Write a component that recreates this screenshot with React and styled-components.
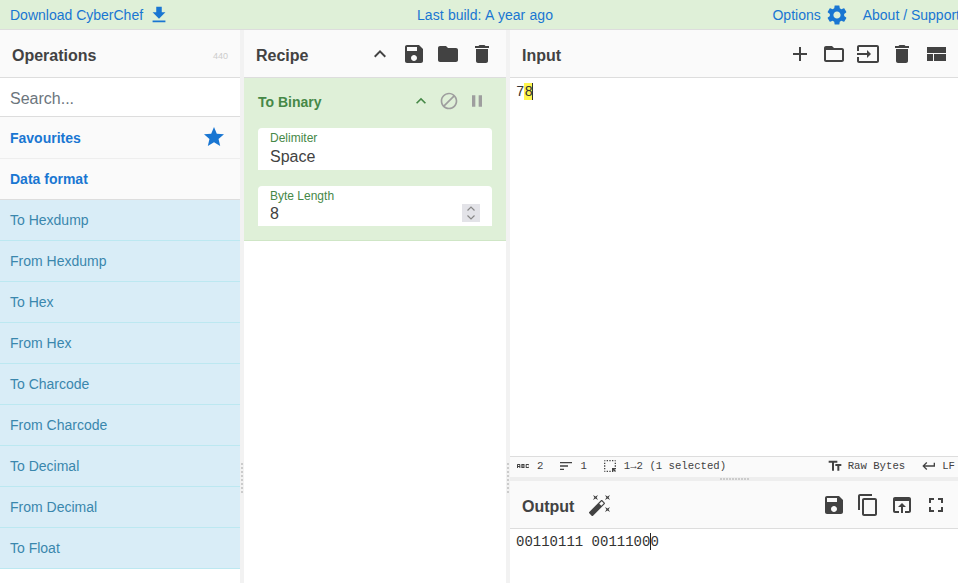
import React from "react";
import styled, { createGlobalStyle } from "styled-components";

const P = {
  save: "M17 3H5c-1.11 0-2 .9-2 2v14c0 1.1.89 2 2 2h14c1.1 0 2-.9 2-2V7l-4-4zm-5 16c-1.66 0-3-1.34-3-3s1.34-3 3-3 3 1.34 3 3-1.34 3-3 3zm3-10H5V5h10v4z",
  folder: "M10 4H4c-1.1 0-1.99.9-1.99 2L2 18c0 1.1.9 2 2 2h16c1.1 0 2-.9 2-2V8c0-1.1-.9-2-2-2h-8l-2-2z",
  del: "M6 19c0 1.1.9 2 2 2h8c1.1 0 2-.9 2-2V7H6v12zM19 4h-3.5l-1-1h-5l-1 1H5v2h14V4z",
  up: "M7.41 15.41L12 10.83l4.59 4.58L18 14l-6-6-6 6z",
  add: "M19 13h-6v6h-2v-6H5v-2h6V5h2v6h6v2z",
  open: "M20 6h-8l-2-2H4c-1.1 0-1.99.9-1.99 2L2 18c0 1.1.9 2 2 2h16c1.1 0 2-.9 2-2V8c0-1.1-.9-2-2-2zm0 12H4V8h16v10z",
  input: "M21 3.01H3c-1.1 0-2 .9-2 2V9h2V4.99h18v14.03H3V15H1v4.01c0 1.1.9 1.98 2 1.98h18c1.1 0 2-.88 2-1.98v-14c0-1.11-.9-2-2-2zM11 16l4-4-4-4v3H1v2h10v3z",
  compact: "M3 19h6v-7H3v7zm7 0h12v-7H10v7zM3 5v6h19V5H3z",
  download: "M19 9h-4V3H9v6H5l7 7 7-7zM5 18v2h14v-2H5z",
  settings: "M19.14 12.94c.04-.3.06-.61.06-.94 0-.32-.02-.64-.07-.94l2.03-1.58c.18-.14.23-.41.12-.61l-1.92-3.32c-.12-.22-.37-.29-.59-.22l-2.39.96c-.5-.38-1.03-.7-1.62-.94l-.36-2.54c-.04-.24-.24-.41-.48-.41h-3.84c-.24 0-.43.17-.47.41l-.36 2.54c-.59.24-1.13.57-1.62.94l-2.39-.96c-.22-.08-.47 0-.59.22L2.74 8.87c-.12.21-.08.47.12.61l2.03 1.58c-.05.3-.09.63-.09.94s.02.64.07.94l-2.03 1.58c-.18.14-.23.41-.12.61l1.92 3.32c.12.22.37.29.59.22l2.39-.96c.5.38 1.03.7 1.62.94l.36 2.54c.05.24.24.41.48.41h3.84c.24 0 .44-.17.47-.41l.36-2.54c.59-.24 1.13-.56 1.62-.94l2.39.96c.22.08.47 0 .59-.22l1.92-3.32c.12-.22.07-.47-.12-.61l-2.01-1.58zM12 15.6c-1.98 0-3.6-1.62-3.6-3.6s1.62-3.6 3.6-3.6 3.6 1.62 3.6 3.6-1.62 3.6-3.6 3.6z",
  star: "M12 17.27L18.18 21l-1.64-7.03L22 9.24l-7.19-.61L12 2 9.19 8.63 2 9.24l5.46 4.73L5.82 21z",
  block: "M12 2C6.48 2 2 6.48 2 12s4.48 10 10 10 10-4.48 10-10S17.52 2 12 2zM4 12c0-4.42 3.58-8 8-8 1.85 0 3.55.63 4.9 1.69L5.69 16.9C4.63 15.55 4 13.85 4 12zm8 8c-1.85 0-3.55-.63-4.9-1.69L18.31 7.1C19.37 8.45 20 10.15 20 12c0 4.42-3.58 8-8 8z",
  pause: "M6 19h4V5H6v14zm8-14v14h4V5h-4z",
  copy: "M16 1H4c-1.1 0-2 .9-2 2v14h2V3h12V1zm3 4H8c-1.1 0-2 .9-2 2v14c0 1.1.9 2 2 2h11c1.1 0 2-.9 2-2V7c0-1.1-.9-2-2-2zm0 16H8V7h11v14z",
  browser: "M19 4H5c-1.11 0-2 .9-2 2v12c0 1.1.89 2 2 2h4v-2H5V8h14v10h-4v2h4c1.1 0 2-.9 2-2V6c0-1.1-.89-2-2-2zm-7 6l-4 4h3v6h2v-6h3l-4-4z",
  full: "M7 14H5v5h5v-2H7v-3zm-2-4h2V7h3V5H5v5zm12 7h-3v2h5v-5h-2v3zM14 5v2h3v3h2V5h-5z",
  wand: "M7.5 5.6L10 7 8.6 4.5 10 2 7.5 3.4 5 2l1.4 2.5L5 7zm12 9.8L17 14l1.4 2.5L17 19l2.5-1.4L22 19l-1.4-2.5L22 14zM22 2l-2.5 1.4L17 2l1.4 2.5L17 7l2.5-1.4L22 7l-1.4-2.5zm-7.63 5.29c-.39-.39-1.02-.39-1.41 0L1.29 18.96c-.39.39-.39 1.02 0 1.41l2.34 2.34c.39.39 1.02.39 1.41 0L16.7 11.05c.39-.39.39-1.02 0-1.41l-2.33-2.35zm-1.03 5.49l-2.12-2.12 2.44-2.44 2.12 2.12-2.44 2.44z",
  text: "M2.5 4v3h5v12h3V7h5V4h-13zm19 5h-9v3h3v7h3v-7h3V9z",
  ret: "M19 7v4H5.83l3.58-3.59L8 6l-6 6 6 6 1.41-1.41L5.83 13H21V7z",
  sort: "M3 18h6v-2H3v2zM3 6v2h18V6H3zm0 7h12v-2H3v2z",
  select: "M17 5h-2V3h2v2zm-2 16h2v-2.59L19.59 21 21 19.59 18.41 17H21v-2h-6v6zm4-12h2V7h-2v2zm0 4h2v-2h-2v2zm-8 8h2v-2h-2v2zM7 5h2V3H7v2zM3 17h2v-2H3v2zm2 4v-2H3c0 1.1.9 2 2 2zM19 3v2h2c0-1.1-.9-2-2-2zm-8 2h2V3h-2v2zM3 9h2V7H3v2zm4 12h2v-2H7v2zm-4-8h2v-2H3v2zm0-8h2V3c-1.1 0-2 .9-2 2z",
  abc: "M21 11h-1.5v-.5h-2v3h2V13H21v1c0 .55-.45 1-1 1h-3c-.55 0-1-.45-1-1v-4c0-.55.45-1 1-1h3c.55 0 1 .45 1 1v1zM8 10v5H6.5v-1.5h-2V15H3v-5c0-.55.45-1 1-1h3c.55 0 1 .45 1 1zm-1.5.5h-2V12h2v-1.5zm7 1.5c.55 0 1 .45 1 1v1c0 .55-.45 1-1 1h-4V9h4c.55 0 1 .45 1 1v1c0 .55-.45 1-1 1zM11 10.5v.75h2v-.75h-2zm2 2.25h-2v.75h2v-.75z",
};

const Global = createGlobalStyle`
  html, body { margin: 0; padding: 0; height: 583px; overflow: hidden; background: #f2f2f2; }
  body { font-family: "Liberation Sans", Arial, sans-serif; font-size: 14px; color: #424242; }
  * { box-sizing: border-box; }
`;

const Svg = styled.svg`
  display: block;
  flex: none;
  fill: ${(p) => p.$color || "#424242"};
  margin-top: ${(p) => p.$lift || 0}px;
`;
const Icon = ({ d, size = 24, color, lift }) => (
  <Svg viewBox="0 0 24 24" width={size} height={size} $color={color} $lift={lift}>
    <path d={d} />
  </Svg>
);

const Page = styled.div`
  width: 958px;
  height: 583px;
  display: flex;
  flex-direction: column;
  overflow: hidden;
  position: relative;
`;
const Banner = styled.header`
  height: 30px;
  flex: none;
  background: #dff0d8;
  border-bottom: 1px solid #ddd;
  display: grid;
  grid-template-columns: 1fr auto 1fr;
  align-items: center;
  padding-left: 10px;
  color: #1976d2;
`;
const BannerLink = styled.span`
  display: flex;
  align-items: center;
  gap: ${(p) => p.$gap || 3}px;
  white-space: nowrap;
  word-spacing: ${(p) => p.$spread || 0}px;
  margin-left: ${(p) => p.$ml || 0}px;
`;
const BannerRight = styled.div`
  display: flex;
  justify-content: flex-end;
  align-items: center;
  gap: 14px;
  margin-right: -2px;
`;
const Columns = styled.div`
  flex: 1;
  min-height: 0;
  display: grid;
  grid-template-columns: 240px 262px 448px;
  column-gap: 4px;
`;
const Column = styled.section`
  display: flex;
  flex-direction: column;
  min-height: 0;
  overflow: hidden;
  background: ${(p) => p.$bg || "#fff"};
`;
const PanelHead = styled.div`
  height: 48px;
  flex: none;
  background: #fafafa;
  border-bottom: 1px solid #ddd;
  display: flex;
  align-items: center;
  padding: 0 ${(p) => p.$right ?? 12}px 0 12px;
`;
const PanelTitle = styled.h2`
  margin: 0;
  font-size: 16px;
  font-weight: 700;
  color: #424242;
  flex: 1;
  padding-top: 4px;
`;
const Count = styled.span`
  font-size: 9px;
  color: #ccc;
  padding-top: 5px;
`;
const Tools = styled.div`
  display: flex;
  align-items: center;
  gap: ${(p) => p.$gap ?? 10}px;
`;
const Search = styled.div`
  height: 39px;
  flex: none;
  background: #fff;
  border-bottom: 1px solid #ddd;
  padding: 4px 10px 0;
  display: flex;
  align-items: center;
  font-size: 16px;
  color: #6c757d;
`;
const Category = styled.div`
  flex: none;
  height: ${(p) => p.$h}px;
  background: #fafafa;
  border-bottom: 1px solid ${(p) => p.$line || "#eee"};
  padding: 0 ${(p) => p.$pr || 10}px 0 10px;
  display: flex;
  align-items: center;
  justify-content: space-between;
  color: #1976d2;
  font-weight: 700;
`;
const Op = styled.div`
  flex: none;
  height: 41px;
  background: #d9edf7;
  border-bottom: 1px solid #bce8f1;
  padding: 0 10px 1px;
  display: flex;
  align-items: center;
  color: #3a87ad;
`;
const RecipeCard = styled.div`
  flex: none;
  height: 163px;
  background: #dff0d8;
  border-bottom: 1px solid #cfe6c6;
  padding: 0 14px;
  color: #3c763d;
`;
const CardHead = styled.div`
  height: 50px;
  display: flex;
  align-items: center;
  justify-content: space-between;
  padding-bottom: 2px;
`;
const CardTitle = styled.span`
  font-weight: 700;
  color: #468847;
`;
const CardTools = styled.div`
  display: flex;
  align-items: center;
  gap: 8px;
  margin-right: 5px;
  margin-top: -3px;
`;
const Field = styled.div`
  position: relative;
  height: ${(p) => p.$h}px;
  margin-bottom: ${(p) => p.$mb || 0}px;
  background: #fff;
  border-radius: 4px 4px 0 0;
  padding: 3px 12px 0;
`;
const FieldLabel = styled.div`
  font-size: 12px;
  line-height: 14px;
  color: #468847;
`;
const FieldValue = styled.div`
  font-size: 16px;
  line-height: 20px;
  margin-top: ${(p) => p.$mt || 1}px;
  color: #424242;
`;
const Spinner = styled.div`
  position: absolute;
  right: 12px;
  top: 18px;
  width: 18px;
  height: 18px;
  background: #e3e3e8;
  display: flex;
  align-items: center;
  justify-content: center;
`;
const Editor = styled.div`
  background: #fff;
  font-family: "Liberation Mono", "Courier New", monospace;
  font-size: 14px;
  line-height: 19px;
  padding: ${(p) => p.$pt ?? 5}px 6px 0;
  color: #333;
  overflow: hidden;
  white-space: pre;
  flex: ${(p) => p.$flex || "none"};
  height: ${(p) => (p.$h ? `${p.$h}px` : "auto")};
  min-height: 0;
`;
const Selected = styled.span`
  background: #fff64c;
  display: inline-block;
  height: 17px;
  border-right: 1px solid #333;
  width: 9px;
  vertical-align: top;
`;
const Caret = styled.span`
  position: relative;
  &::after {
    content: "";
    position: absolute;
    left: 0;
    top: -1px;
    height: 17px;
    border-left: 1px solid #222;
  }
`;
const StatusBar = styled.div`
  height: 21px;
  flex: none;
  background: #fafafa;
  border-top: 1px solid #ddd;
  font-family: "Liberation Mono", monospace;
  font-size: 10.67px;
  color: #424242;
  display: flex;
  align-items: center;
  padding: 0 3px 2px 5px;
  white-space: nowrap;
`;
const Stat = styled.span`
  display: flex;
  align-items: center;
  gap: ${(p) => p.$gap ?? 6}px;
  margin-right: ${(p) => p.$mr ?? 15}px;
`;
const Spacer = styled.div`
  flex: 1;
`;
const HGutter = styled.div`
  height: 4px;
  flex: none;
  background: #eee;
  position: relative;
  &::after {
    content: "";
    position: absolute;
    left: 210px;
    top: 1px;
    width: 30px;
    height: 2px;
    background: repeating-linear-gradient(90deg, #ccc 0 2px, transparent 2px 3px);
  }
`;
const OutTitle = styled.h2`
  margin: 0 14px 0 0;
  font-size: 16px;
  font-weight: 700;
  color: #424242;
  padding-top: 4px;
`;
const VGrip = styled.div`
  position: absolute;
  left: ${(p) => p.$x}px;
  top: 463px;
  width: 2px;
  height: 32px;
  background: repeating-linear-gradient(180deg, #ccc 0 2px, transparent 2px 4px);
`;

const ops = ["To Hexdump","From Hexdump","To Hex","From Hex","To Charcode","From Charcode","To Decimal","From Decimal","To Float"];

export default function App() {
  return (
    <Page>
      <Global />
      <Banner>
        <BannerLink $gap={5}>Download CyberChef <Icon d={P.download} size={22} color="#1976d2" /></BannerLink>
        <BannerLink $spread={0.5} $ml={2}>Last build: A year ago</BannerLink>
        <BannerRight>
          <BannerLink $gap={4}>Options <Icon d={P.settings} size={24} color="#1976d2" /></BannerLink>
          <BannerLink>About / Support</BannerLink>
        </BannerRight>
      </Banner>
      <Columns>
        <Column>
          <PanelHead>
            <PanelTitle>Operations</PanelTitle>
            <Count>440</Count>
          </PanelHead>
          <Search>Search...</Search>
          <Category $h={42} $pr={14}>Favourites <Icon d={P.star} size={24} color="#1976d2" lift={-2} /></Category>
          <Category $h={41} $line="#ddd">Data format</Category>
          {ops.map((o) => <Op key={o}>{o}</Op>)}
        </Column>
        <Column>
          <PanelHead $right={12}>
            <PanelTitle>Recipe</PanelTitle>
            <Tools $gap={10}>
              <Icon d={P.up} />
              <Icon d={P.save} />
              <Icon d={P.folder} />
              <Icon d={P.del} />
            </Tools>
          </PanelHead>
          <RecipeCard>
            <CardHead>
              <CardTitle>To Binary</CardTitle>
              <CardTools>
                <Icon d={P.up} size={20} color="#468847" />
                <Icon d={P.block} size={20} color="#9e9e9e" />
                <Icon d={P.pause} size={20} color="#9e9e9e" />
              </CardTools>
            </CardHead>
            <Field $h={42} $mb={16}>
              <FieldLabel>Delimiter</FieldLabel>
              <FieldValue $mt={2}>Space</FieldValue>
            </Field>
            <Field $h={40}>
              <FieldLabel>Byte Length</FieldLabel>
              <FieldValue>8</FieldValue>
              <Spinner>
                <svg width="12" height="16" viewBox="0 0 12 16" fill="none" stroke="#888" strokeWidth="1.2">
                  <path d="M2.5 5.5L6 2l3.5 3.5M2.5 10.5L6 14l3.5-3.5" />
                </svg>
              </Spinner>
            </Field>
          </RecipeCard>
        </Column>
        <Column>
          <PanelHead $right={10}>
            <PanelTitle>Input</PanelTitle>
            <Tools $gap={10}>
              <Icon d={P.add} />
              <Icon d={P.open} />
              <Icon d={P.input} />
              <Icon d={P.del} />
              <Icon d={P.compact} />
            </Tools>
          </PanelHead>
          <Editor $flex="1">7<Selected>8</Selected></Editor>
          <StatusBar>
            <Stat><Icon d={P.abc} size={16} />2</Stat>
            <Stat><Icon d={P.sort} size={16} />1</Stat>
            <Stat $gap={6}><Icon d={P.select} size={16} />1→2 (1 selected)</Stat>
            <Spacer />
            <Stat $gap={5} $mr={16}><Icon d={P.text} size={16} />Raw Bytes</Stat>
            <Stat $gap={5} $mr={0}><Icon d={P.ret} size={16} />LF</Stat>
          </StatusBar>
          <HGutter />
          <PanelHead $right={10}>
            <OutTitle>Output</OutTitle>
            <Icon d={P.wand} />
            <Spacer />
            <Tools $gap={10}>
              <Icon d={P.save} />
              <Icon d={P.copy} />
              <Icon d={P.browser} />
              <Icon d={P.full} />
            </Tools>
          </PanelHead>
          <Editor $h={54} $pt={4}>00110111 0011100<Caret />0</Editor>
        </Column>
      </Columns>
      <VGrip $x={241} />
      <VGrip $x={507} />
    </Page>
  );
}
